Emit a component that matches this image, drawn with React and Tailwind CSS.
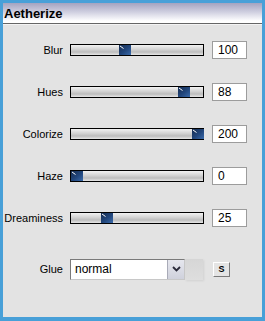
import React from 'react';

const sliders = [
  { label: 'Blur', value: '100', pos: 48 },
  { label: 'Hues', value: '88', pos: 107 },
  { label: 'Colorize', value: '200', pos: 121 },
  { label: 'Haze', value: '0', pos: 0 },
  { label: 'Dreaminess', value: '25', pos: 30 },
];

const Thumb = ({ left }) => (
  <svg className="absolute top-0" style={{ left }} width="12" height="10" viewBox="0 0 12 10">
    <defs>
      <linearGradient id="th" x1="0" y1="0" x2="1" y2="1">
        <stop offset="0" stopColor="#152c50" />
        <stop offset="0.55" stopColor="#22477d" />
        <stop offset="1" stopColor="#3b6bab" />
      </linearGradient>
    </defs>
    <rect width="12" height="10" fill="url(#th)" />
    <line x1="1" y1="1" x2="4.5" y2="3.5" stroke="#ffffff" strokeWidth="1" />
  </svg>
);

const SliderRow = ({ label, value, pos }) => (
  <div className="flex items-center h-[42px]">
    <div className="w-[60px] text-right text-[11px] text-black leading-none">{label}</div>
    <div className="ml-[7px] relative w-[134px] h-[12px] border border-black bg-[linear-gradient(to_bottom,#f2f2f2,#d2d2d2_45%,#bdbdbd_70%,#e6e6e6)]">
      <Thumb left={pos} />
    </div>
    <div className="ml-[8px] w-[35px] h-[18px] bg-white border border-[#9c9c9c] flex items-center pl-[5px] text-[12px] text-black leading-none">
      {value}
    </div>
  </div>
);

export default function App() {
  return (
    <div className="w-[265px] h-[321px] bg-[#48a0d8] pt-[3px] px-[3px] pb-[4px] font-['Liberation_Sans',Arial,sans-serif]">
      <div className="h-full flex flex-col bg-[#e3e3e3]">
        <div className="h-[21px] shrink-0 bg-[linear-gradient(to_bottom,#a3a3c0,#cfcfe0_45%,#ffffff_90%)] border-b border-[#666666] flex items-center pl-[1px]">
          <span className="text-[13px] font-bold text-black leading-none">Aetherize</span>
        </div>
        <div className="pt-[4px] border-t border-[#f4f4f4]">
          {sliders.map((s) => (
            <SliderRow key={s.label} {...s} />
          ))}
          <div className="flex items-center h-[42px] mt-[9px]">
            <div className="w-[60px] text-right text-[11px] text-black leading-none">Glue</div>
            <div className="ml-[7px] flex items-center">
              <div className="w-[115px] h-[21px] bg-white border border-t-[#7a7a7a] border-l-[#7a7a7a] border-r-[#c8c8c8] border-b-[#c8c8c8] flex items-center">
                <span className="flex-1 pl-[4px] text-[12px] text-black leading-none">normal</span>
                <div className="w-[17px] h-[19px] bg-[linear-gradient(to_bottom,#e6e7ee,#cfd1dc)] border-l border-[#a9abb8] flex items-center justify-center">
                  <svg width="9" height="6" viewBox="0 0 9 6">
                    <path d="M1 1 L4.5 4.5 L8 1" fill="none" stroke="#2a2a3a" strokeWidth="1.8" />
                  </svg>
                </div>
              </div>
              <div className="w-[18px] h-[21px] bg-[linear-gradient(to_bottom,#d6d6d6,#dedede)] shadow-[1px_1px_2px_rgba(0,0,0,0.08)]" />
            </div>
            <div className="ml-[10px] w-[17px] h-[15px] bg-[#e4e4e4] border border-t-[#ffffff] border-l-[#ffffff] border-r-[#7a7a7a] border-b-[#7a7a7a] flex items-center justify-center">
              <span className="text-[9px] font-bold text-black leading-none">S</span>
            </div>
          </div>
        </div>
      </div>
    </div>
  );
}
